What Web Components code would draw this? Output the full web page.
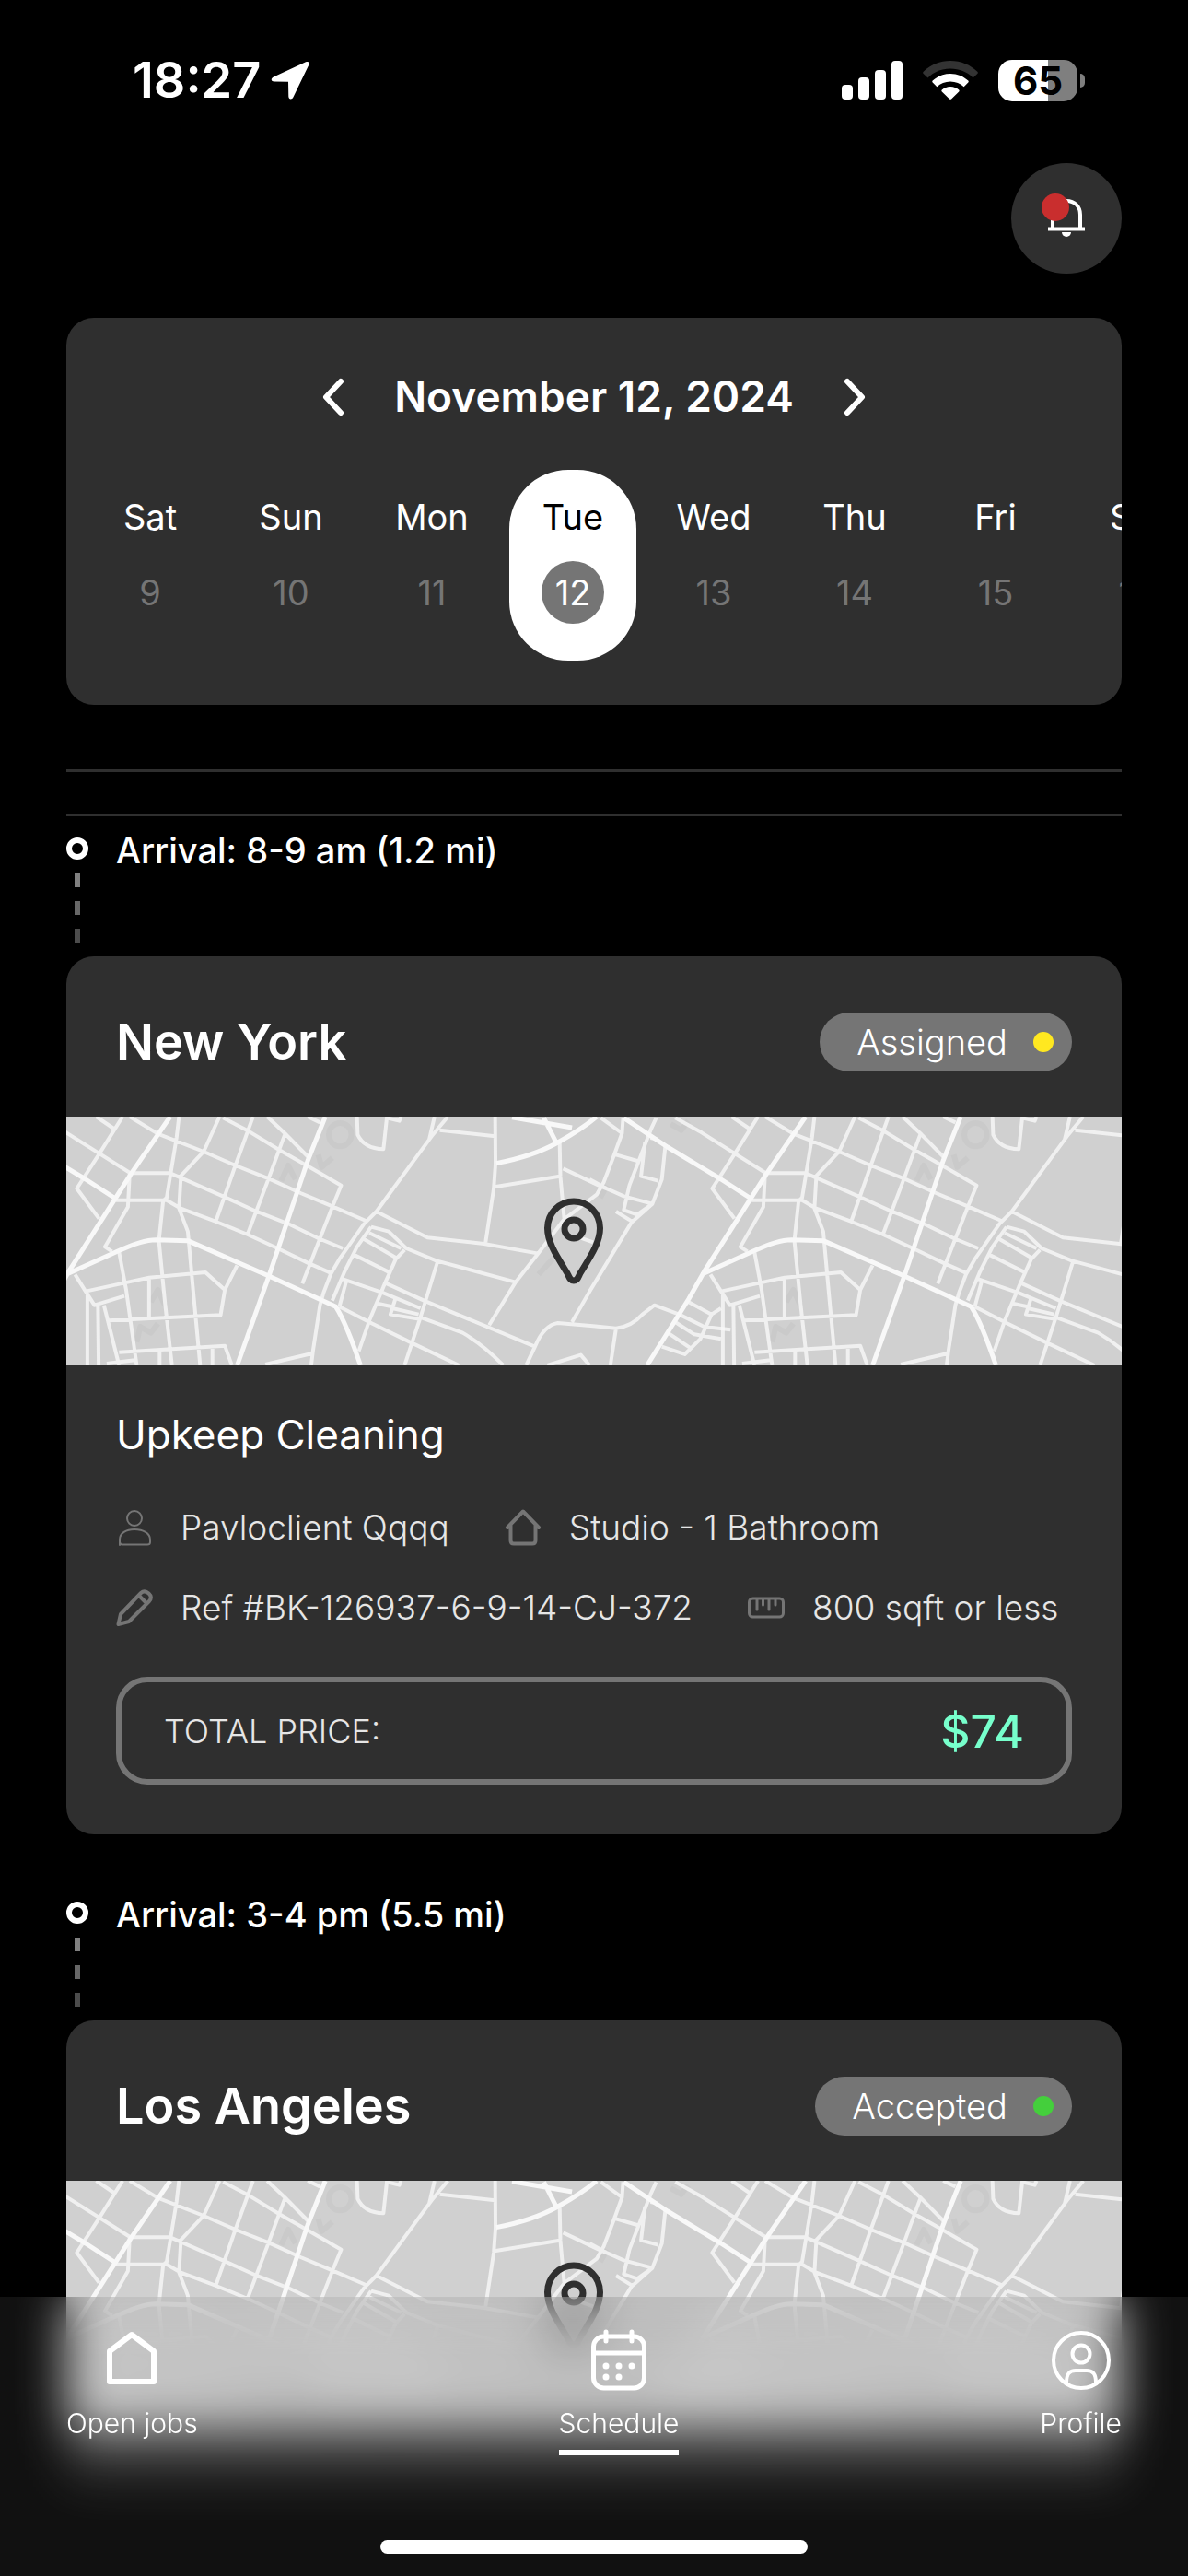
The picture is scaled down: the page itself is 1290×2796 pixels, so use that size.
<!DOCTYPE html>
<html lang="en">
<head>
<meta charset="utf-8">
<meta name="viewport" content="width=device-width, initial-scale=1">
<title>Schedule</title>
<style>
    body {
        margin: 0;
        background: #000;
        color: #fff;
        font-family: Inter, "Open Sans", sans-serif;
        font-size: 38px;
        line-height: 54px;
    }
</style>
</head>
<body>
<schedule-app></schedule-app>

<script>
// base class: puts the markup into an open shadow root
class BaseElement extends HTMLElement {
    render(html) {
        const template = document.createElement("template")
        template.innerHTML = `
        <style>
            * { box-sizing: border-box; }
            svg { display: block; }
            button {
                border: 0;
                padding: 0;
                margin: 0;
                background: none;
                color: inherit;
                font: inherit;
                cursor: pointer;
            }
        </style>
        ${html}`
        this.shadow = this.attachShadow({ mode: 'open' })
        this.shadow.appendChild(template.content.cloneNode(true))
    }
}

class StatusBar extends BaseElement {
    constructor() {
        super()
        this.render(`
        <style>
            :host {
                display: flex;
                justify-content: space-between;
                align-items: center;
                height: 54px;
                padding: 0 112px 0 144px;
            }
            .group {
                display: flex;
                align-items: center;
            }
            .time {
                font-size: 54px;
                font-weight: 600;
                margin-right: 10px;
            }
            .right {
                gap: 22px;
            }
            .battery {
                display: flex;
                align-items: center;
                gap: 3px;
            }
            .level {
                width: 86px;
                height: 45px;
                border-radius: 15px;
                background: linear-gradient(to right, #fff 63%, #7f7f7f 63%);
                color: #000;
                font-size: 42px;
                font-weight: 700;
                line-height: 45px;
                text-align: center;
            }
            .nub {
                width: 5px;
                height: 15px;
                border-radius: 0 5px 5px 0;
                background: #7f7f7f;
            }
        </style>
        <div class="group">
            <span class="time">18:27</span>
            <svg width="44" height="44" viewBox="0 0 44 44" fill="#fff">
                <path d="M39 2.3 4 18.5C.8 20 1 23.4 4.800 23.500L20 23.700 20.300 39.500C20.400 43.200 24 43.600 25.500 40.300L42.300 5.500C43.600 2.600 41.800 1.100 39 2.300Z"/>
            </svg>
        </div>
        <div class="group right">
            <svg width="66" height="42" viewBox="0 0 66 42" fill="#fff">
                <rect x="0" y="26" width="12" height="16" rx="4"/>
                <rect x="18" y="18" width="12" height="24" rx="4"/>
                <rect x="36" y="10" width="12" height="32" rx="4"/>
                <rect x="54" y="0" width="12" height="42" rx="4"/>
            </svg>
            <svg width="60" height="42" viewBox="0 0 60 42" fill="#fff">
                <path fill="#333" d="M30 0C18.500 0 8 4.500.7 11.800c-.7.700-.7 1.500 0 2.200l4.800 4.500C11.800 12 20.500 8.600 30 8.600S48.200 12 54.500 18.500l4.800-4.500c.7-.7.7-1.500 0-2.200C52 4.500 41.500 0 30 0Z"/>
                <path d="M30 14c-7.500 0-14.200 2.800-19.300 7.600-.6.600-.6 1.400 0 2l4.700 4.600C19.200 24.600 24.300 22.500 30 22.500s10.800 2.100 14.600 5.700l4.700-4.600c.6-.6.6-1.400 0-2C44.200 16.800 37.500 14 30 14Z"/>
                <path d="M30 28c-3.500 0-6.700 1.300-9.200 3.500-.6.600-.6 1.300 0 1.900l8.200 8c.6.600 1.400.600 2 0l8.200-8c.6-.6.6-1.300 0-1.900C36.700 29.300 33.500 28 30 28Z"/>
            </svg>
            <div class="battery">
                <div class="level">65</div>
                <div class="nub"></div>
            </div>
        </div>
        `)
    }
}

customElements.define("status-bar", StatusBar)

class NotificationButton extends BaseElement {
    constructor() {
        super()
        this.render(`
        <style>
            :host {
                display: block;
            }
            button {
                display: flex;
                align-items: center;
                justify-content: center;
                width: 120px;
                height: 120px;
                border-radius: 50%;
                background: #2f2f2f;
            }
        </style>
        <button type="button" aria-label="Notifications">
            <svg width="60" height="60" viewBox="0 0 60 60" fill="none">
                <path d="M10 41.500H50M15 41V26C15 17 21 11 30 11S45 17 45 26V41" stroke="#fff" stroke-width="4"/>
                <path d="M25 45H35A5 5 0 0 1 25 45Z" fill="#fff"/>
                <circle cx="18" cy="18" r="15" fill="#c92e2e"/>
            </svg>
        </button>
        `)
    }
}

customElements.define("notification-button", NotificationButton)

class CalendarDay extends BaseElement {
    constructor() {
        super()
        this.render(`
        <style>
            :host {
                display: block;
                flex: none;
                width: 138px;
            }
            button {
                display: flex;
                flex-direction: column;
                align-items: center;
                gap: 21px;
                width: 100%;
                padding: 24px 0 40px;
                border-radius: 64px;
            }
            .date {
                width: 68px;
                height: 68px;
                border-radius: 50%;
                line-height: 68px;
                color: #757575;
            }
            :host([selected]) button {
                background: #fff;
                color: #000;
            }
            :host([selected]) .date {
                background: #757575;
                color: #fff;
            }
        </style>
        <button type="button">
            <slot></slot>
            <span class="date"></span>
        </button>
        `)
    }

    connectedCallback() {
        this.shadow.querySelector(".date").textContent = this.getAttribute("date")
    }
}

customElements.define("calendar-day", CalendarDay)

class WeekCalendar extends BaseElement {
    constructor() {
        super()
        this.render(`
        <style>
            :host {
                display: block;
                overflow: hidden;
                padding: 54px 0 48px 22px;
                border-radius: 30px;
                background: #2f2f2f;
            }
            .header {
                display: flex;
                align-items: center;
                justify-content: center;
                gap: 36px;
                margin: 0 22px 48px 0;
            }
            h1 {
                margin: 0;
                font-size: 46px;
                font-weight: 600;
                line-height: 63px;
            }
            .header button {
                width: 60px;
                display: flex;
                justify-content: center;
            }
            .days {
                display: flex;
                gap: 15px;
            }
        </style>
        <div class="header">
            <button type="button" aria-label="Previous week">
                <svg width="24" height="42" viewBox="0 0 24 42" fill="none" stroke="#fff" stroke-width="6" stroke-linecap="round" stroke-linejoin="round"><path d="M20 4 4 21 20 38"/></svg>
            </button>
            <h1><slot name="title"></slot></h1>
            <button type="button" aria-label="Next week">
                <svg width="24" height="42" viewBox="0 0 24 42" fill="none" stroke="#fff" stroke-width="6" stroke-linecap="round" stroke-linejoin="round"><path d="M4 4 20 21 4 38"/></svg>
            </button>
        </div>
        <div class="days"><slot></slot></div>
        `)
    }
}

customElements.define("week-calendar", WeekCalendar)

// street map, one block of streets drawn twice side by side
class StreetMap extends BaseElement {
    constructor() {
        super()
        this.render(`
        <style>
            :host {
                display: grid;
                height: 270px;
                overflow: hidden;
                background: #d0d0d0;
            }
            .streets, .pin {
                grid-area: 1 / 1;
            }
            .pin {
                place-self: center;
                padding-right: 44px;
            }
            #block path {
                vector-effect: non-scaling-stroke;
            }
        </style>
        <svg class="streets" width="100%" height="270">
            <defs>
                <g id="block" transform="translate(-2 -12) scale(.3827 .3333)" fill="none" stroke="#f8f8f8" stroke-linejoin="round">
                    <path stroke="#cacaca" stroke-width="6" d="M750 95a32 38 0 1 0 64 0a32 38 0 1 0-64 0M720 160l10 40 30-30M615 245l20-50 20 45M245 640l20-40 20 50M205 770l10-50 30 20 20-30M1520 300l20-40M1720 60l30 20 20-30M1345 550l40-50"/>
                    <path stroke-width="5" d="M-150 846L-32 630 15 535 190 220 300 36M5 550L150 475Q220 437 260 437L350 440 580 555 770 655Q800 710 840 846M740 36L690 180 580 555 490 846M-216 40L-92 135 60 240 145 303M1225 188Q1330 165 1400 120Q1470 75 1510 36M1270 38L1440 72M1360 40L1395 120"/>
                    <path stroke-width="4" stroke-opacity=".8" d="M-70 40L5 88 190 222M90 36L140 75M165 36L100 155 35 270 98 368M185 36L265 92 395 150 485 195 580 238 670 285 760 328 855 375
                        M440 36L395 150 325 235M535 36L485 195 430 375M450 40L525 85 610 145 695 200 785 260 760 330 675 580M575 36L625 90 692 168M625 95L580 235 520 418
                        M325 36L318 105 290 300 280 310 268 440 285 640 305 846M690 36L725 55
                        M190 220H300L330 235 455 298 545 345 635 385 720 432 790 465M145 308H290L330 335 430 378 520 420 605 465 690 512 755 545
                        M330 235L325 335 350 410 365 600 385 846M185 220L180 330 115 460 135 475M155 478L175 600 205 846
                        M60 605L240 560 400 543 455 600M490 520L455 600 443 682 125 700M240 560V690M30 550L60 605 85 650 170 620M65 610V846M95 650L97 846M112 650L155 846
                        M155 803L455 782 475 846M120 840L205 828M270 800V846M420 785V846
                        M1088 36L1045 95 885 345 850 385 780 500 755 550 735 610 725 650 705 800 700 846M570 843L700 808M1050 36L1035 110M1065 80L1222 100
                        M1222 36L1223 190 1218 270 1195 445M1405 120L1407 230 1418 370M1220 265L1405 230M1415 205L1520 262 1568 285
                        M830 36L832 95Q850 140 905 142L915 36M915 40L950 50 955 36M885 345L1030 430 1190 450 1345 482
                        M870 395L830 460 795 540 760 635M870 395L920 410 970 465 1055 505 1280 575M865 415L955 465M850 435L940 495M820 485L925 545
                        M965 470L940 500 905 590 865 700 835 800M1058 510L1010 690 965 846M790 565L905 610 1010 660M905 575L1020 635 1335 785M780 655L870 708 980 770 1120 846M800 570L780 655
                        M1010 690L1130 740Q1190 780 1245 846M940 625L925 680 1005 695M890 645L930 655M930 660L1005 680
                        M1280 575L1205 715M1345 480L1280 575M1345 480L1418 370 1510 290 1530 250 1560 160 1582 90 1585 40
                        M1440 705L1490 605 1609 380 1668 320 1695 240 1705 130M1310 846L1335 785Q1360 715 1400 708L1500 718 1565 725Q1609 720 1640 680L1674 650 1744 680M1565 725L1549 846M1370 846L1465 812 1490 846
                        M1522 40L1582 90M1679 40L1663 80 1603 260 1587 340 1625 355 1668 320M1565 160L1625 180M1647 120L1636 230 1684 245M1663 105L1682 110M1490 240L1538 270 1587 295 1668 320M1565 345L1614 380M1450 425L1500 445
                        M1771 640L1836 680 1863 660M1744 680L1815 720 1890 730M1733 705L1787 745 1863 760M1712 740L1777 790M1695 785L1760 810 1804 760 1836 680"/>
                </g>
            </defs>
            <use href="#block"/>
            <use href="#block" x="690"/>
        </svg>
        <div class="pin">
            <svg width="66" height="94" viewBox="0 0 66 94" fill="none" stroke="#2f2f2f" stroke-width="7">
                <path stroke-linejoin="round" d="M33 90C29 90 28 86 26 82 15 64 4.500 49 4.500 33a28.500 29 0 0 1 57 0C61.500 49 51 64 40 82 38 86 37 90 33 90Z"/>
                <circle cx="33" cy="34" r="10"/>
            </svg>
        </div>
        `)
    }
}

customElements.define("street-map", StreetMap)

const ICONS = {
    user: '<circle cx="20" cy="10" r="8" stroke-width="2"/><path stroke-width="2" d="M4 39V33C4 26 11 22 20 22S37 26 37 33V36Q37 38.500 34 38.500H7Q4 38.500 4 35.500"/>',
    house: '<path stroke-width="4" d="M3 20 20 2.500 37 20M6.500 17V34Q6.500 37.500 10 37.500H30Q33.500 37.500 33.500 34V17"/>',
    pencil: '<path stroke-width="4" d="M2.500 38 5 27 27 4Q31 .5 35.500 4.500T36 13L14 35 2.500 38ZM25 7 33 15"/>',
    ruler: '<rect x="1.500" y="10" width="37" height="20" rx="4" stroke-width="3"/><path stroke-width="3" d="M10 11V22M16.500 11V17M23 11V22M30 11V17"/>'
}

class JobDetail extends BaseElement {
    constructor() {
        super()
        this.render(`
        <style>
            :host {
                display: flex;
                align-items: center;
                gap: 30px;
                color: #e6e6e6;
                font-size: 37px;
                font-weight: 300;
                white-space: nowrap;
            }
            svg {
                flex: none;
            }
        </style>
        <svg width="40" height="40" viewBox="0 0 40 40" fill="none" stroke="#757575" stroke-linecap="round" stroke-linejoin="round"></svg>
        <span><slot></slot></span>
        `)
    }

    connectedCallback() {
        this.shadow.querySelector("svg").innerHTML = ICONS[this.getAttribute("icon")]
    }
}

customElements.define("job-detail", JobDetail)

class JobCard extends BaseElement {
    constructor() {
        super()
        this.render(`
        <style>
            :host {
                display: block;
            }
            .arrival {
                display: flex;
                gap: 30px;
                height: 142px;
                font-weight: 500;
            }
            .arrival svg {
                flex: none;
                margin-top: 13px;
            }
            article {
                overflow: hidden;
                border-radius: 30px;
                background: #2f2f2f;
            }
            header {
                display: flex;
                align-items: center;
                justify-content: space-between;
                height: 174px;
                padding: 12px 54px 0;
            }
            h2 {
                margin: 0;
                font-size: 54px;
                font-weight: 600;
            }
            .status {
                display: flex;
                align-items: center;
                gap: 28px;
                height: 64px;
                padding: 0 20px 0 40px;
                border-radius: 32px;
                background: #757575;
                font-weight: 300;
            }
            .dot {
                width: 22px;
                height: 22px;
                border-radius: 50%;
                background: #ffe820;
            }
            :host([status="Accepted"]) .dot {
                background: #44cf3c;
            }
            .body {
                padding: 44px 54px 54px;
            }
            h3 {
                margin: 0 0 42px;
                font-size: 44px;
                font-weight: 400;
                line-height: 63px;
            }
            .details {
                display: flex;
                flex-wrap: wrap;
                gap: 33px 60px;
            }
            .price {
                display: flex;
                align-items: center;
                justify-content: space-between;
                height: 117px;
                margin-top: 48px;
                padding: 0 46px;
                border: 6px solid #757575;
                border-radius: 34px;
                color: #e6e6e6;
                font-size: 36px;
                font-weight: 300;
            }
            .price b {
                color: #77ffcc;
                font-size: 50px;
                font-weight: 500;
            }
            /* a card without its details yet keeps the room for them */
            :host([loading]) .body {
                height: 510px;
            }
            :host([loading]) .body > * {
                display: none;
            }
        </style>
        <div class="arrival">
            <svg width="24" height="114" viewBox="0 0 24 114" fill="none">
                <circle cx="12" cy="12" r="9" stroke="#fff" stroke-width="6"/>
                <path d="M9 39h6v15H9z" fill="#808080"/>
                <path d="M9 69h6v15H9z" fill="#676767"/>
                <path d="M9 99h6v15H9z" fill="#4c4c4c"/>
            </svg>
            <span id="arrival"></span>
        </div>
        <article>
            <header>
                <h2 id="city"></h2>
                <span class="status"><span id="status"></span><span class="dot"></span></span>
            </header>
            <street-map></street-map>
            <div class="body">
                <h3><slot name="service"></slot></h3>
                <div class="details"><slot></slot></div>
                <div class="price"><span>TOTAL PRICE:</span><b><slot name="price"></slot></b></div>
            </div>
        </article>
        `)
    }

    connectedCallback() {
        for (const name of ["arrival", "city", "status"]) {
            this.shadow.querySelector("#" + name).textContent = this.getAttribute(name)
        }
    }
}

customElements.define("job-card", JobCard)

class NavItem extends BaseElement {
    constructor() {
        super()
        this.render(`
        <style>
            :host {
                display: block;
            }
            a {
                display: flex;
                flex-direction: column;
                align-items: center;
                color: #fff;
                font-size: 30px;
                font-weight: 300;
                line-height: 45px;
                text-decoration: none;
            }
            .label {
                margin-top: 10px;
                padding-bottom: 6px;
                border-bottom: 6px solid transparent;
            }
            :host([active]) .label {
                border-color: #fff;
            }
        </style>
        <a href="#">
            <slot name="icon"></slot>
            <span class="label"><slot></slot></span>
        </a>
        `)
    }

    connectedCallback() {
        if (this.hasAttribute("active")) {
            this.shadow.querySelector("a").setAttribute("aria-current", "page")
        }
    }
}

customElements.define("nav-item", NavItem)

class BottomNav extends BaseElement {
    constructor() {
        super()
        this.render(`
        <style>
            :host {
                position: absolute;
                left: 0;
                right: 0;
                bottom: 0;
                display: flex;
                flex-direction: column;
                justify-content: space-between;
                height: 303px;
                padding: 33px 0 24px;
                background: rgba(101, 101, 101, .168);
                -webkit-backdrop-filter: blur(26px);
                backdrop-filter: blur(26px);
            }
            nav {
                display: flex;
                justify-content: space-between;
                padding: 0 72px;
            }
            .indicator {
                align-self: center;
                width: 36%;
                height: 15px;
                border-radius: 8px;
                background: #fff;
            }
        </style>
        <nav><slot></slot></nav>
        <div class="indicator"></div>
        `)
    }
}

customElements.define("bottom-nav", BottomNav)

class ScheduleApp extends BaseElement {
    constructor() {
        super()
        this.render(`
        <style>
            :host {
                display: block;
                position: relative;
                height: 100vh;
                overflow: hidden;
                background: #000;
            }
            main {
                height: calc(100vh - 106px);
                overflow: hidden;
                padding: 60px 0 0;
            }
            .content {
                display: flex;
                flex-direction: column;
                padding: 63px 72px 0;
            }
            notification-button {
                align-self: flex-end;
                margin-bottom: 48px;
            }
            hr {
                width: 100%;
                height: 3px;
                margin: 0;
                border: 0;
                background: #2f2f2f;
            }
            hr:first-of-type {
                margin: 70px 0 45px;
            }
            job-card {
                margin: 10px 0 50px;
            }
        </style>
        <main>
            <status-bar></status-bar>
            <div class="content">
                <notification-button></notification-button>
                <week-calendar>
                    <span slot="title">November 12, 2024</span>
                    <calendar-day date="9">Sat</calendar-day>
                    <calendar-day date="10">Sun</calendar-day>
                    <calendar-day date="11">Mon</calendar-day>
                    <calendar-day date="12" selected>Tue</calendar-day>
                    <calendar-day date="13">Wed</calendar-day>
                    <calendar-day date="14">Thu</calendar-day>
                    <calendar-day date="15">Fri</calendar-day>
                    <calendar-day date="16">Sat</calendar-day>
                </week-calendar>
                <hr>
                <hr>
                <job-card arrival="Arrival: 8-9 am (1.2 mi)" city="New York" status="Assigned">
                    <span slot="service">Upkeep Cleaning</span>
                    <job-detail icon="user">Pavloclient Qqqq</job-detail>
                    <job-detail icon="house">Studio - 1 Bathroom</job-detail>
                    <job-detail icon="pencil">Ref #BK-126937-6-9-14-CJ-372</job-detail>
                    <job-detail icon="ruler">800 sqft or less</job-detail>
                    <span slot="price">$74</span>
                </job-card>
                <job-card arrival="Arrival: 3-4 pm (5.5 mi)" city="Los Angeles" status="Accepted" loading></job-card>
            </div>
        </main>
        <bottom-nav>
            <nav-item>
                <svg slot="icon" width="72" height="72" viewBox="0 0 72 72" fill="none" stroke="#fff" stroke-width="6" stroke-linejoin="round"><path d="M12 26 36 8 60 26V59H12Z"/></svg>
                Open jobs
            </nav-item>
            <nav-item active>
                <svg slot="icon" width="72" height="72" viewBox="0 0 72 72" fill="none" stroke="#fff" stroke-width="5" stroke-linecap="round">
                    <rect x="8.500" y="10" width="55" height="56" rx="11"/>
                    <path d="M9 28H63M22 5V15M50 5V15"/>
                    <path stroke-width="7" d="M22 42h.01M36 42h.01M50 42h.01M22 54h.01M36 54h.01"/>
                </svg>
                Schedule
            </nav-item>
            <nav-item>
                <svg slot="icon" width="72" height="72" viewBox="0 0 72 72" fill="none" stroke="#fff" stroke-width="4">
                    <circle cx="36" cy="36" r="30"/>
                    <circle cx="36" cy="29" r="9.500"/>
                    <path d="M20 60C20 51 23 47 30 47H42C49 47 52 51 52 60"/>
                </svg>
                Profile
            </nav-item>
        </bottom-nav>
        `)
    }
}

customElements.define("schedule-app", ScheduleApp)
</script>
</body>
</html>
